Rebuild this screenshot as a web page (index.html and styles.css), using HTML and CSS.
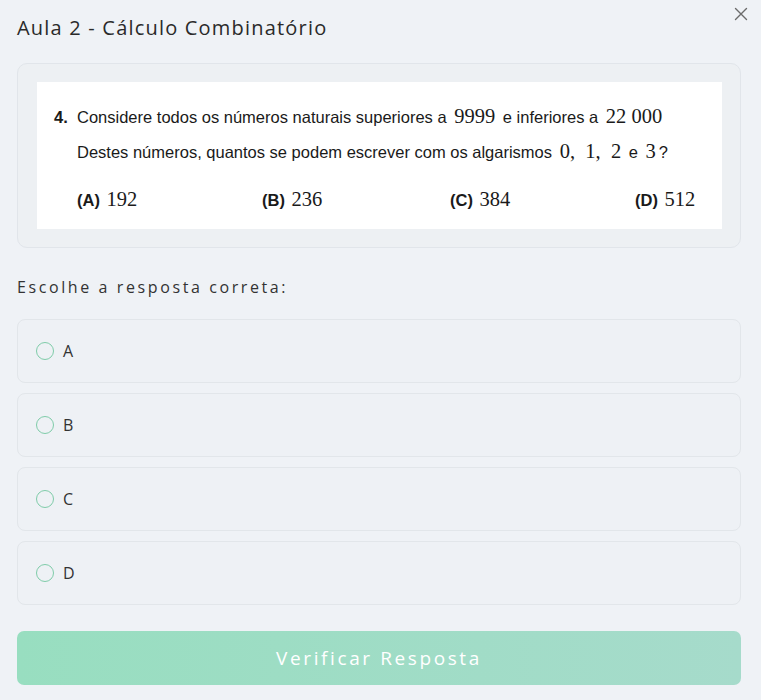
FILE: index.html
```html
<!DOCTYPE html>
<html lang="pt">
<head>
    <meta charset="UTF-8">
    <meta name="viewport" content="width=device-width, initial-scale=1.0">
    <title>Aula 2 - Cálculo Combinatório</title>
    <link rel="stylesheet" href="styles.css">
</head>
<body>
    <div class="modal">
        <div class="header">
            <h2>Aula 2 - Cálculo Combinatório</h2>
            <svg class="close" width="14" height="14" viewBox="0 0 14 14"><path d="M1.5 1.5l11 11M12.5 1.5l-11 11" stroke="#6b6b6b" stroke-width="1.4" fill="none" stroke-linecap="round"/></svg>
        </div>

        <div class="question-card">
            <div class="question">
                <p class="line"><b class="num">4.</b>Considere todos os números naturais superiores a <span class="m">9999</span> e inferiores a <span class="m">22 000</span></p>
                <p class="line indent">Destes números, quantos se podem escrever com os algarismos <span class="m">0, &nbsp;1, &nbsp;2</span> e <span class="m">3</span>?</p>
                <div class="choices">
                    <span><b>(A)</b> <span class="m">192</span></span>
                    <span><b>(B)</b> <span class="m">236</span></span>
                    <span><b>(C)</b> <span class="m">384</span></span>
                    <span><b>(D)</b> <span class="m">512</span></span>
                </div>
            </div>
        </div>

        <p class="prompt">Escolhe a resposta correta:</p>

        <div class="options">
            <label class="option"><input type="radio" name="resp" value="A"><span class="dot"></span>A</label>
            <label class="option"><input type="radio" name="resp" value="B"><span class="dot"></span>B</label>
            <label class="option"><input type="radio" name="resp" value="C"><span class="dot"></span>C</label>
            <label class="option"><input type="radio" name="resp" value="D"><span class="dot"></span>D</label>
        </div>

        <button class="verify" disabled>Verificar Resposta</button>
    </div>
</body>
</html>
```

FILE: styles.css
```css
body { margin: 0; background: #eff2f6; font-family: "Open Sans", sans-serif; color: #2b2b2b; }
.modal { padding: 0 20px 0 17px; }
.header { display: flex; justify-content: space-between; align-items: flex-start; height: 63px; }
.header h2 { margin: 14px 0 0; font-size: 20px; font-weight: 400; letter-spacing: 1.2px; color: #2a2a2a; }
.close { margin: 7px -7px 0 0; }
.question-card { border: 1px solid #e1e5ea; border-radius: 10px; background: #edf0f3; padding: 18px 18px 18px 19px; }
.question { background: #fff; padding: 23px 20px 18px 17px; font-family: "Liberation Sans", Arial, sans-serif; font-size: 16.5px; color: #1a1a1a; }
.line { margin: 0; height: 35px; line-height: 22px; }
.num { display: inline-block; width: 23px; }
.indent { padding-left: 23px; }
.m { font-family: "Liberation Serif", "Times New Roman", serif; font-size: 20.5px; margin: 0 3px; }
.choices { display: grid; grid-template-columns: 185px 188px 185px 1fr; padding-left: 23px; margin-top: 13px; line-height: 22px; }
.choices .m { margin: 0 0 0 2px; }
.prompt { margin: 28px 0 21px; font-size: 16px; letter-spacing: 2.6px; color: #333; }
.options { display: flex; flex-direction: column; gap: 10px; }
.option { display: flex; align-items: center; height: 62px; border: 1px solid #e2e6ea; border-radius: 8px; background: #eef1f5; padding-left: 18px; font-size: 16px; color: #333; }
.option input { display: none; }
.dot { width: 16px; height: 16px; border: 1.5px solid #7fcca9; border-radius: 50%; margin-right: 9px; }
.verify { display: block; width: 100%; margin-top: 26px; height: 54px; border: none; border-radius: 7px; background: linear-gradient(90deg, #98dec0, #a6dbcb); color: #fff; font-family: "Open Sans", sans-serif; font-size: 19px; letter-spacing: 2.6px; }
```
